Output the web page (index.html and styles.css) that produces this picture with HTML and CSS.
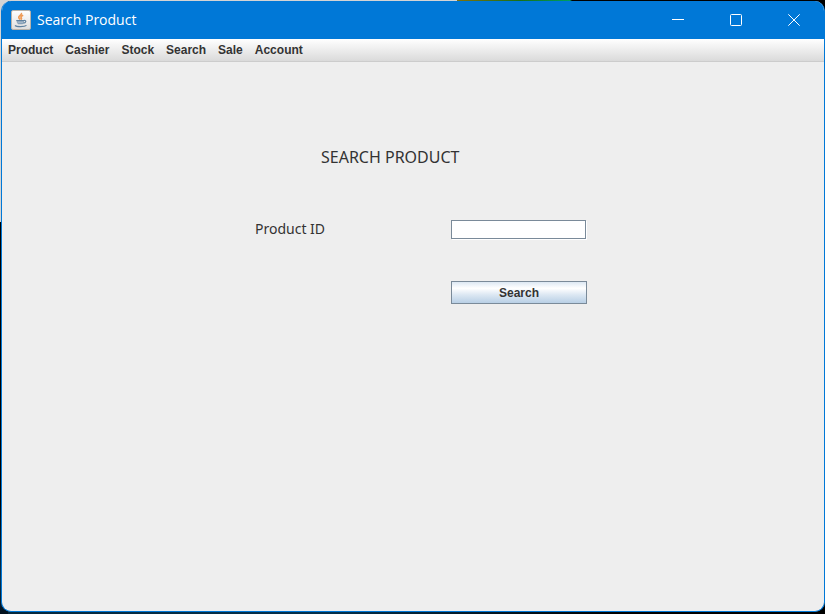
FILE: index.html
```
<!DOCTYPE html>
<html lang="en">
<head>
<meta charset="utf-8">
<title>Search Product</title>
<link rel="stylesheet" href="styles.css">
</head>
<body>
<div class="window">
  <header class="titlebar">
    <svg class="app-icon" viewBox="0 0 20 20" aria-hidden="true">
      <defs><linearGradient id="tile" x1="0" y1="0" x2="0" y2="1"><stop offset="0" stop-color="#fff"/><stop offset="1" stop-color="#dedede"/></linearGradient></defs>
      <rect x=".5" y=".5" width="19" height="19" rx="1.500" fill="url(#tile)" stroke="#b9b3aa"/>
      <path d="M10.300 3c1.200 1.700-3 2.700-2.500 4.500.2.900 1 1.400 1.300 2.100M12.200 5.200c-2 .9-2.700 1.600-1.900 2.700.4.600.1 1.200-.4 1.700" fill="none" stroke="#ee9a55" stroke-width="1.700"/>
      <path d="M5.500 10.300h7.500c0 2-.5 3.200-1.500 4H7.200c-1.100-.8-1.700-2-1.700-4z" fill="#86a0b8"/>
      <path d="M5.300 10.500h7.800M13 10.500c2.800-.4 2.200 2.400-.8 2.700M4 15.500c1.500 1.500 9.500 1.500 11.500-.1" fill="none" stroke="#5f819f" stroke-width="1.200"/>
      <path d="M6.500 12.200h5.500" stroke="#c9d5df" stroke-width=".6"/>
    </svg>
    <span class="caption">Search Product</span>
    <div class="controls">
      <button type="button" aria-label="Minimize"><svg viewBox="0 0 12 12"><path d="M0 5.500h12"/></svg></button>
      <button type="button" aria-label="Maximize"><svg viewBox="0 0 12 12"><rect x=".5" y=".5" width="11" height="11" rx="1"/></svg></button>
      <button type="button" aria-label="Close"><svg viewBox="0 0 12 12"><path d="M.3.3l11.400 11.400M11.700.3L.3 11.700"/></svg></button>
    </div>
  </header>
  <nav class="menubar">
    <button type="button">Product</button>
    <button type="button">Cashier</button>
    <button type="button">Stock</button>
    <button type="button">Search</button>
    <button type="button">Sale</button>
    <button type="button">Account</button>
  </nav>
  <main class="content">
    <form class="search-form">
      <h1>SEARCH PRODUCT</h1>
      <label for="product-id">Product ID</label>
      <input id="product-id" type="text">
      <button class="submit" type="button">Search</button>
    </form>
  </main>
</div>
</body>
</html>
```
FILE: styles.css
```
* {
  box-sizing: border-box;
}

body {
  margin: 0;
  min-height: 100vh;
  display: flex;
  padding: 1px 0 2px 1px;
  background:
    linear-gradient(90deg, #d4d4d4 457px, #80700c 457px, #187018 520px, #00a060 570px, #000 572px) top / 100% 1px no-repeat,
    linear-gradient(#d4d4d4 222px, #000 222px, #000 500px, #043050 580px, #02101c) left / 8px 100% no-repeat,
    linear-gradient(90deg, #06283c, #04304c 40%, #000 75%) bottom / 100% 8px no-repeat,
    #000;
}

button {
  margin: 0;
  padding: 0;
  border: 0;
  background: none;
  color: inherit;
  font: inherit;
}

.window {
  flex: 1;
  display: flex;
  flex-direction: column;
  overflow: hidden;
  border: 1px solid #0078d7;
  border-top: 0;
  border-radius: 10px;
  background: #eee;
  color: #333;
}

.titlebar {
  display: flex;
  align-items: center;
  height: 38px;
  padding: 0 1px 0 9px;
  background: #0078d7;
  color: #fff;
}

.app-icon {
  width: 20px;
  height: 20px;
  margin-right: 6px;
}

.caption {
  font: 14px/20px "Open Sans", "Noto Sans", sans-serif;
}

.controls {
  display: flex;
  align-self: stretch;
  margin-left: auto;
}

.controls button {
  display: grid;
  place-items: center;
  width: 58px;
}

.controls svg {
  width: 12px;
  height: 12px;
  fill: none;
  stroke: #fff;
}

.menubar {
  display: flex;
  gap: 12px;
  height: 23px;
  padding: 0 6px;
  border-bottom: 1px solid #ccc;
  background: linear-gradient(#fff, #dadada);
  font: bold 12px/20px "Liberation Sans", Arial, sans-serif;
}

.content {
  flex: 1;
  display: grid;
  grid-template-columns: 253fr auto 237fr;
  align-content: start;
  padding-top: 83px;
}

.search-form {
  grid-column: 2;
  display: grid;
  grid-template-columns: 196px 136px;
  align-items: center;
  font: 14px/20px "Noto Sans", "Open Sans", sans-serif;
}

.search-form h1 {
  grid-column: 1 / -1;
  margin: 0 0 50px 66px;
  font-size: 16px;
  font-weight: 400;
  line-height: 24px;
}

.search-form input {
  width: 135px;
  height: 19px;
  padding: 0 3px;
  border: 1px solid #7a8a99;
  background: #fff;
  box-shadow: 1px 1px 0 #fff;
  font: 12px "Liberation Sans", Arial, sans-serif;
}

.search-form .submit {
  grid-column: 2;
  height: 23px;
  margin-top: 42px;
  border: 1px solid #7a8a99;
  background: linear-gradient(#dde8f3, #fff 30%, #dde8f3 60%, #b8cfe5);
  font: bold 12px "Liberation Sans", Arial, sans-serif;
}
```
